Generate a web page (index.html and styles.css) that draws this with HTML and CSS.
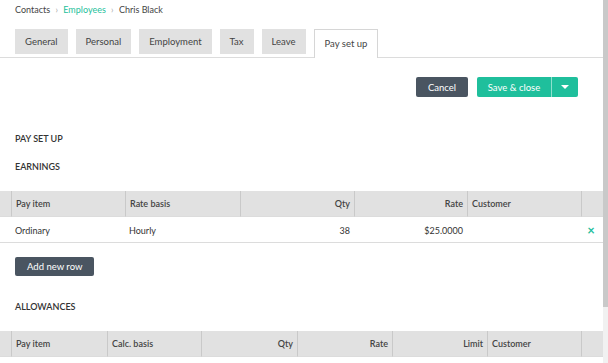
FILE: index.html
```html
<!DOCTYPE html>
<html lang="en">
<head>
  <meta charset="UTF-8">
  <title>Chris Black - Pay set up</title>
  <link rel="stylesheet" href="styles.css">
</head>
<body>
  <div class="page">
    <div class="main">
      <div class="breadcrumb">
        <span>Contacts</span>
        <span class="sep">&rsaquo;</span>
        <a href="#" class="crumb-link">Employees</a>
        <span class="sep">&rsaquo;</span>
        <span>Chris Black</span>
      </div>

      <div class="tabs">
        <div class="tab">General</div>
        <div class="tab">Personal</div>
        <div class="tab">Employment</div>
        <div class="tab">Tax</div>
        <div class="tab">Leave</div>
        <div class="tab active">Pay set up</div>
      </div>

      <div class="toolbar">
        <button class="btn btn-dark">Cancel</button>
        <div class="split-btn">
          <button class="btn-save">Save &amp; close</button>
          <button class="btn-caret"><span class="caret"></span></button>
        </div>
      </div>

      <h2 class="section-title">PAY SET UP</h2>
      <h3 class="section-title sub">EARNINGS</h3>

      <div class="grid earnings">
        <div class="cell head"></div>
        <div class="cell head">Pay item</div>
        <div class="cell head">Rate basis</div>
        <div class="cell head num">Qty</div>
        <div class="cell head num">Rate</div>
        <div class="cell head">Customer</div>
        <div class="cell head"></div>

        <div class="cell"></div>
        <div class="cell">Ordinary</div>
        <div class="cell">Hourly</div>
        <div class="cell num">38</div>
        <div class="cell num">$25.0000</div>
        <div class="cell"></div>
        <div class="cell remove">&times;</div>
      </div>

      <button class="btn btn-dark add-row">Add new row</button>

      <h3 class="section-title allow">ALLOWANCES</h3>

      <div class="grid allowances">
        <div class="cell head"></div>
        <div class="cell head">Pay item</div>
        <div class="cell head">Calc. basis</div>
        <div class="cell head num">Qty</div>
        <div class="cell head num">Rate</div>
        <div class="cell head num">Limit</div>
        <div class="cell head">Customer</div>
        <div class="cell head"></div>
      </div>
    </div>

    <div class="scrollbar">
      <div class="thumb"></div>
    </div>
  </div>
</body>
</html>
```

FILE: styles.css
```css
body {
  margin: 0;
  font-family: Lato, "Open Sans", sans-serif;
  font-size: 10px;
  color: #333;
  background: #fff;
}
.page {
  display: flex;
  height: 363px;
  overflow: hidden;
}
.main {
  flex: 1;
  min-width: 0;
}
.scrollbar {
  width: 5px;
  background: #f1f1f1;
}
.thumb {
  height: 307px;
  background: #c9c9c9;
}
.breadcrumb {
  padding: 3px 15px 0;
  height: 14px;
  font-size: 9px;
  line-height: 14px;
  color: #444;
}
.breadcrumb .sep {
  color: #aaa;
  margin: 0 3px;
}
.crumb-link {
  color: #1fbf9c;
  text-decoration: none;
}
.tabs {
  display: flex;
  align-items: flex-start;
  gap: 8px;
  padding: 12px 0 0 15px;
  height: 28px;
  border-bottom: 1px solid #dcdcdc;
}
.tab {
  height: 25px;
  line-height: 25px;
  padding: 0 10px;
  font-size: 9.5px;
  background: #e1e1e1;
  color: #444;
}
.tab.active {
  height: 28px;
  line-height: 27px;
  background: #fff;
  border: 1px solid #d6d6d6;
  border-bottom: none;
}
.toolbar {
  display: flex;
  justify-content: flex-end;
  gap: 9px;
  padding: 19px 25px 0 0;
}
.btn {
  border: none;
  border-radius: 2px;
  font-family: inherit;
  font-size: 9.5px;
  color: #fff;
  height: 20px;
  padding: 0 12px;
  cursor: pointer;
}
.btn-dark {
  background: #4a5561;
}
.split-btn {
  display: flex;
  height: 20px;
  background: #1fbf9c;
  border-radius: 2px;
}
.btn-save {
  width: 75px;
  border: none;
  background: transparent;
  color: #fff;
  font-family: inherit;
  font-size: 9.5px;
  padding: 0;
  border-right: 1px solid #8fe0cd;
}
.btn-caret {
  width: 26px;
  border: none;
  background: transparent;
  display: flex;
  align-items: center;
  justify-content: center;
  padding: 0;
}
.caret {
  width: 0;
  height: 0;
  border-left: 4px solid transparent;
  border-right: 4px solid transparent;
  border-top: 4px solid #fff;
}
.section-title {
  margin: 0;
  padding-left: 15px;
  font-size: 9px;
  font-weight: 600;
  color: #333;
  line-height: 12px;
}
h2.section-title {
  padding-top: 36px;
}
.section-title.sub {
  padding-top: 16px;
}
.grid {
  display: grid;
  margin-top: 18px;
}
.earnings {
  grid-template-columns: 11px 114px 115px 114px 113px 114px 1fr;
}
.allowances {
  grid-template-columns: 11px 96px 94px 96px 95px 95px 94px 1fr;
  margin-top: 18px;
}
.cell {
  height: 25px;
  line-height: 27px;
  padding: 0 4px;
  font-size: 9px;
  border-bottom: 1px solid #dcdcdc;
  white-space: nowrap;
  overflow: hidden;
}
.cell.head {
  line-height: 25px;
  background: #e1e1e1;
  border-left: 1px solid #c9c9c9;
  font-weight: 600;
  color: #444;
}
.cell.head:first-child {
  border-left: none;
}
.num {
  text-align: right;
}
.remove {
  color: #1fbf9c;
  font-size: 13px;
  font-weight: 700;
  text-align: center;
  padding-left: 2px;
}
.add-row {
  display: block;
  margin: 14px 0 0 15px;
  height: 19px;
  padding: 0 12px;
}
.section-title.allow {
  padding-top: 25px;
}
```
